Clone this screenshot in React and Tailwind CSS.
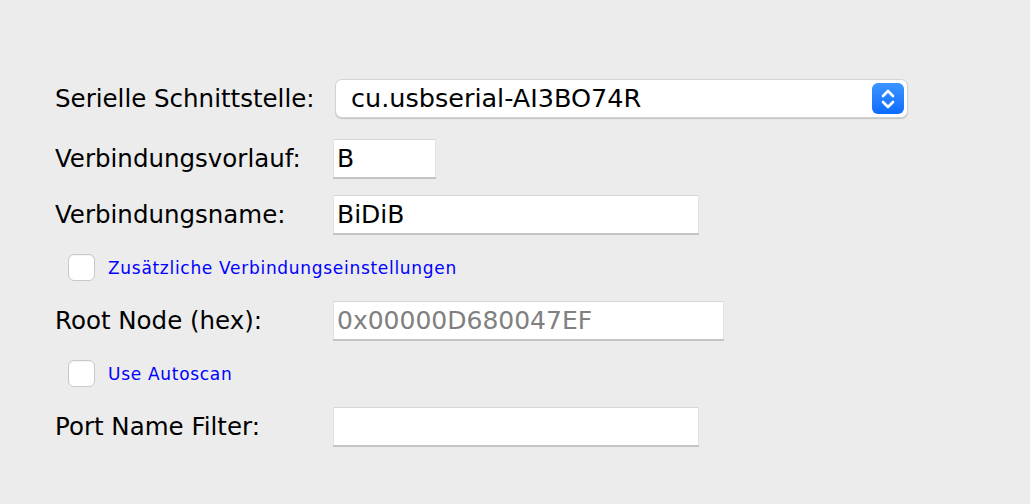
import React from "react";

const font = { fontFamily: '"DejaVu Sans", "Liberation Sans", sans-serif' };

function Field({ value, width, gray }) {
  return (
    <div
      className={`h-[38px] bg-white border-t border-t-[#d6d6d6] border-x border-x-[#e4e4e4] shadow-[0_2px_0_#c4c4c4] flex items-center pl-[3px] text-[25px] ${gray ? "text-[#808080]" : "text-black"}`}
      style={{ width }}
    >
      {value}
    </div>
  );
}

function Label({ children }) {
  return <div className="w-[278px] shrink-0 text-[24.5px] text-black leading-none pt-[2px]">{children}</div>;
}

function Check({ label }) {
  return (
    <div className="h-[27px] flex items-center pl-[13px]">
      <div className="w-[27px] h-[27px] rounded-[6px] bg-white border border-[#c9c9c9] shadow-[inset_0_1px_1px_rgba(0,0,0,0.05)]" />
      <span className="ml-[13px] text-[17px] text-[#0000ff] tracking-[0.7px] leading-none pt-[2px]">{label}</span>
    </div>
  );
}

export default function App() {
  return (
    <div className="w-[1030px] h-[504px] bg-[#ececec] pl-[55px] pt-[79px] flex flex-col" style={font}>
      <div className="flex items-center h-[39px]">
        <Label>Serielle Schnittstelle:</Label>
        <div className="ml-[2px] w-[573px] h-[39px] bg-white rounded-[7px] border border-[#d4d4d4] shadow-[0_1px_1px_rgba(0,0,0,0.18)] flex items-center justify-between pl-[15px] pr-[3px]">
          <span className="text-[25.5px] text-black">cu.usbserial-AI3BO74R</span>
          <div className="w-[32px] h-[31px] rounded-[6px] bg-gradient-to-b from-[#3d94ff] to-[#0a6bfd] flex items-center justify-center">
            <svg width="16" height="22" viewBox="0 0 16 22" fill="none" stroke="white" strokeWidth="2.6" strokeLinecap="round" strokeLinejoin="round">
              <path d="M3 8 L8 3 L13 8" />
              <path d="M3 14 L8 19 L13 14" />
            </svg>
          </div>
        </div>
      </div>
      <div className="flex items-center mt-[21px]">
        <Label>Verbindungsvorlauf:</Label>
        <Field value="B" width={103} />
      </div>
      <div className="flex items-center mt-[18px]">
        <Label>Verbindungsname:</Label>
        <Field value="BiDiB" width={366} />
      </div>
      <div className="mt-[21px]">
        <Check label="Zusätzliche Verbindungseinstellungen" />
      </div>
      <div className="flex items-center mt-[20px]">
        <Label>Root Node (hex):</Label>
        <Field value="0x00000D680047EF" width={391} gray />
      </div>
      <div className="mt-[21px]">
        <Check label="Use Autoscan" />
      </div>
      <div className="flex items-center mt-[20px]">
        <Label>Port Name Filter:</Label>
        <Field value="" width={366} />
      </div>
    </div>
  );
}
